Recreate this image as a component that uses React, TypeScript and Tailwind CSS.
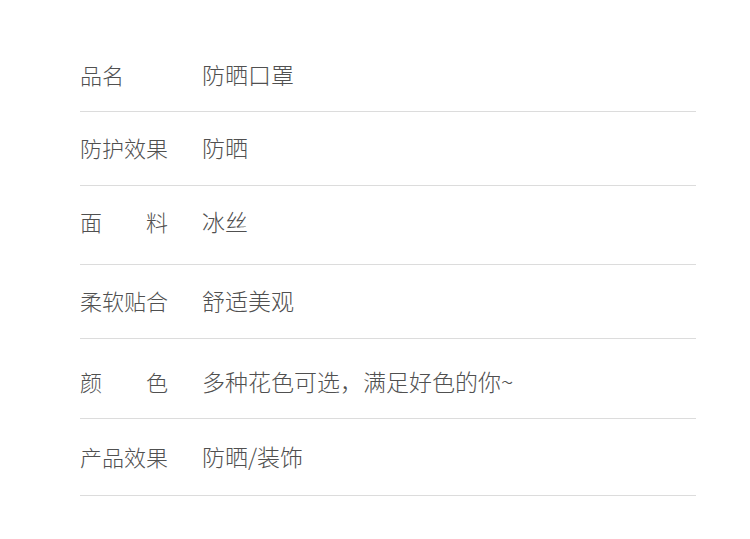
import React from "react";

type Row = { label: string[]; value: string; h: string; pt: string };

const rows: Row[] = [
  { label: ["品名"], value: "防晒口罩", h: "h-[112px]", pt: "pt-[62px]" },
  { label: ["防护效果"], value: "防晒", h: "h-[74px]", pt: "pt-[23px]" },
  { label: ["面", "料"], value: "冰丝", h: "h-[79px]", pt: "pt-[23px]" },
  { label: ["柔软贴合"], value: "舒适美观", h: "h-[74px]", pt: "pt-[23px]" },
  { label: ["颜", "色"], value: "多种花色可选，满足好色的你~", h: "h-[80px]", pt: "pt-[30px]" },
  { label: ["产品效果"], value: "防晒/装饰", h: "h-[77px]", pt: "pt-[25px]" },
];

export default function App() {
  return (
    <div
      className="w-[750px] h-[539px] bg-white overflow-hidden"
      style={{ fontFamily: '"Noto Sans CJK SC", "Noto Sans", sans-serif' }}
    >
      <div className="ml-[80px] w-[616px] flex flex-col">
        {rows.map((r, i) => (
          <div
            key={i}
            className={`flex items-start border-b border-[#dcdcdc] ${r.h} ${r.pt}`}
          >
            <div className="w-[122px] shrink-0">
              {r.label.length === 2 ? (
                <div className="w-[88px] flex justify-between text-[22px] leading-[24px] font-light text-[#505050]">
                  <span>{r.label[0]}</span>
                  <span>{r.label[1]}</span>
                </div>
              ) : (
                <div className="text-[22px] leading-[24px] font-light text-[#505050]">{r.label[0]}</div>
              )}
            </div>
            <div className="text-[23px] leading-[24px] font-light text-[#505050] whitespace-nowrap">{r.value}</div>
          </div>
        ))}
      </div>
    </div>
  );
}
